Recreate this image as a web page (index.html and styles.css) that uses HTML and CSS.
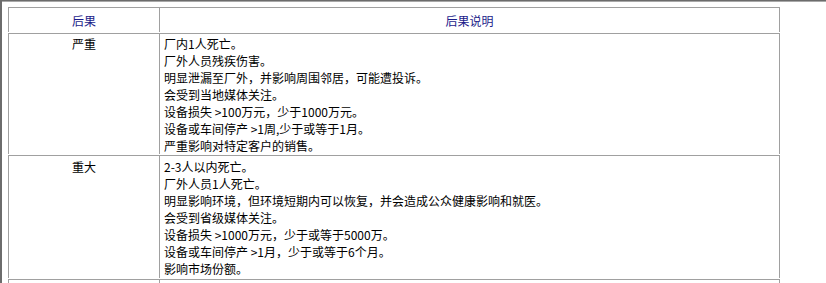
FILE: index.html
```html
<!DOCTYPE html>
<html lang="zh-CN">
<head>
<meta charset="utf-8">
<title>后果说明</title>
<link rel="stylesheet" href="styles.css">
</head>
<body>
<div class="frame">
  <div class="frame-inner">
    <table class="grid">
      <colgroup>
        <col class="col-level">
        <col class="col-desc">
      </colgroup>
      <tr class="head">
        <td class="c-level">后果</td>
        <td class="c-head">后果说明</td>
      </tr>
      <tr class="row row-a">
        <td class="c-level">严重</td>
        <td class="c-desc">厂内1人死亡。<br>厂外人员残疾伤害。<br>明显泄漏至厂外，并影响周围邻居，可能遭投诉。<br>会受到当地媒体关注。<br>设备损失 &gt;100万元，少于1000万元。<br>设备或车间停产 &gt;1周,少于或等于1月。<br>严重影响对特定客户的销售。</td>
      </tr>
      <tr class="row row-b">
        <td class="c-level">重大</td>
        <td class="c-desc">2-3人以内死亡。<br>厂外人员1人死亡。<br>明显影响环境，但环境短期内可以恢复，并会造成公众健康影响和就医。<br>会受到省级媒体关注。<br>设备损失 &gt;1000万元，少于或等于5000万。<br>设备或车间停产 &gt;1月，少于或等于6个月。<br>影响市场份额。</td>
      </tr>
      <tr class="row row-b">
        <td class="c-level">&nbsp;</td>
        <td class="c-desc">&nbsp;</td>
      </tr>
    </table>
  </div>
</div>
</body>
</html>
```

FILE: styles.css
```css
html, body {
  margin: 0;
  padding: 0;
  background: #ffffff;
}

body {
  font-family: "Noto Sans CJK SC", "Noto Sans", sans-serif;
  font-size: 12px;
  line-height: 17px;
  color: #000000;
}

.frame {
  border-top: 1px solid #6c6c6c;
  border-left: 2px solid #6c6c6c;
  min-height: 100vh;
  box-sizing: border-box;
}

.frame-inner {
  border-top: 1px solid #a8a8a8;
  padding: 4px 0 0 6px;
}

.grid {
  border-collapse: separate;
  border-spacing: 0 1px;
  table-layout: fixed;
  width: 772px;
}

.col-level { width: 152px; }
.col-desc { width: 620px; }

.grid td {
  border-top: 1px solid #a0a0a0;
  border-right: 1px solid #a0a0a0;
  vertical-align: top;
  padding: 0 4px;
}

.grid td.c-level {
  border-left: 1px solid #a0a0a0;
  text-align: center;
}

.head td {
  padding-top: 4px;
  padding-bottom: 3px;
  color: #1c1c8a;
}

.head .c-head {
  text-align: center;
}

.row-a td {
  padding-top: 1px;
  padding-bottom: 0;
}

.row-b td {
  padding-top: 2px;
  padding-bottom: 1px;
}

.c-desc {
  text-align: left;
}
```
